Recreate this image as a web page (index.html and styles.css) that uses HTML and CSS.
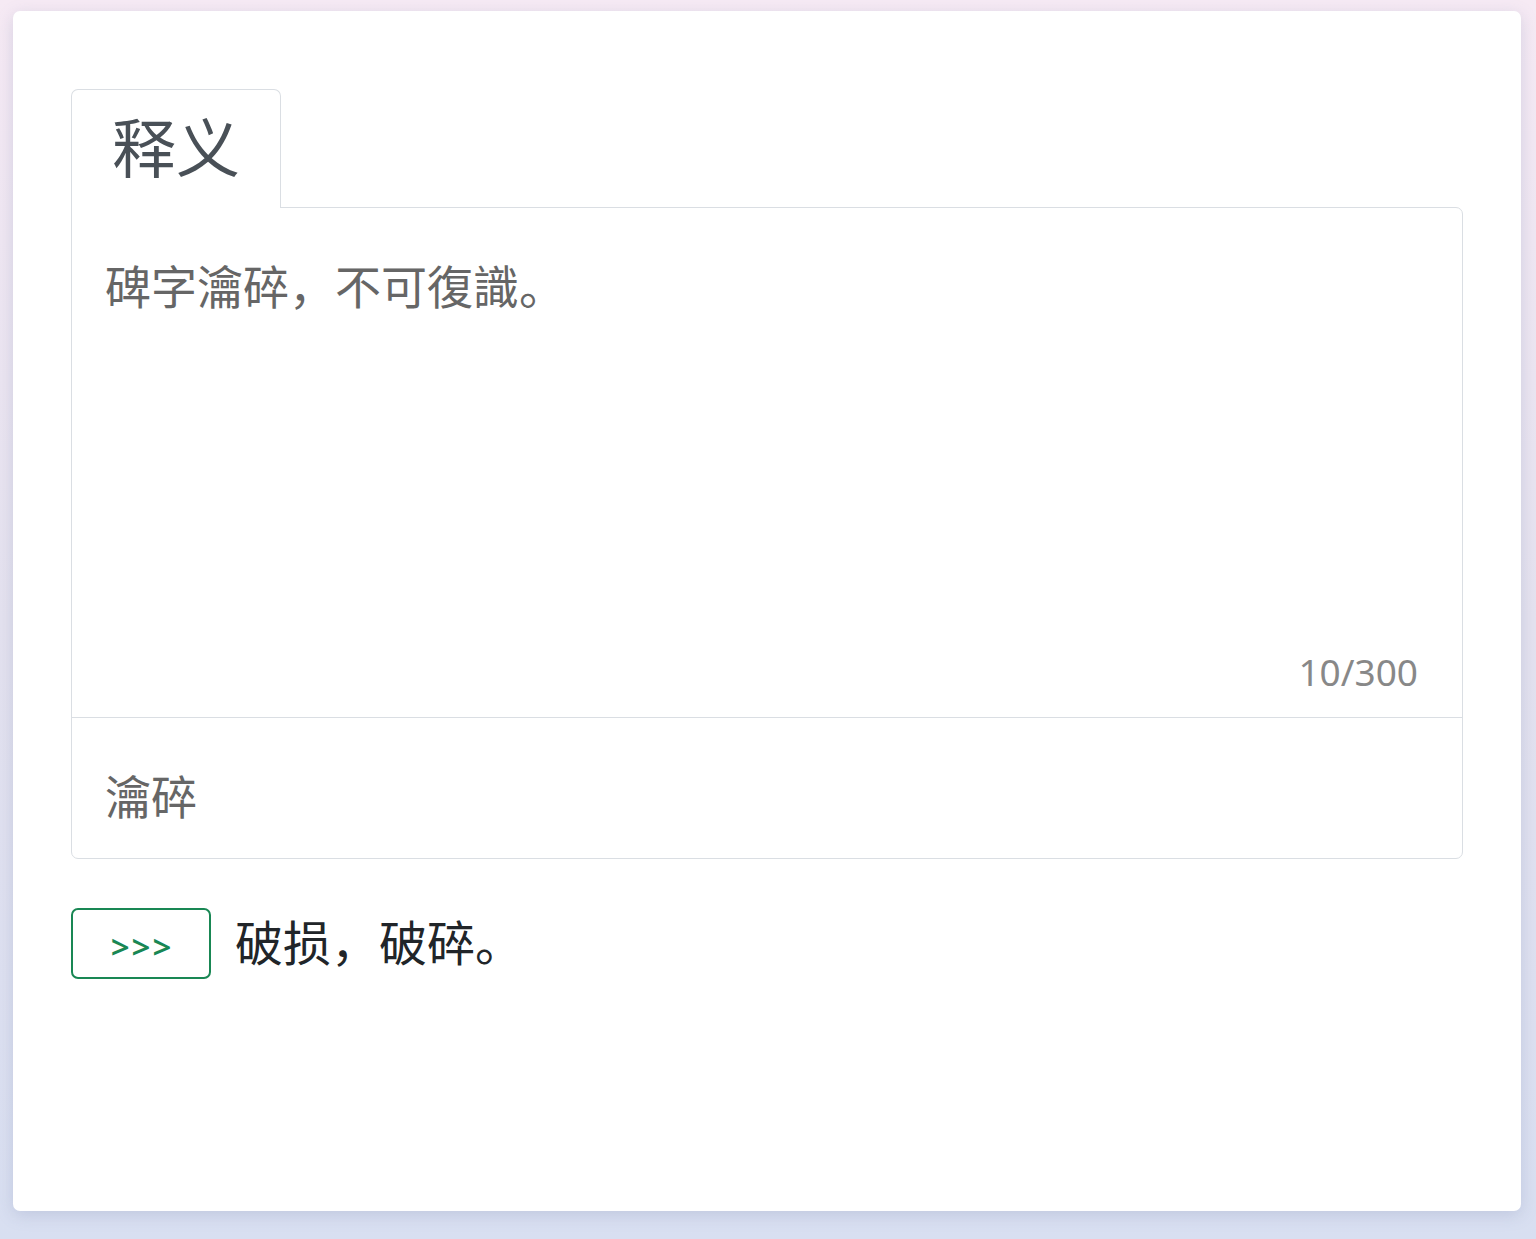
FILE: index.html
```html
<!DOCTYPE html>
<html lang="zh">
<head>
<meta charset="utf-8">
<title>释义</title>
<link rel="stylesheet" href="styles.css">
</head>
<body>
<div class="card">
  <div class="tabs">
    <div class="tab">释义</div>
  </div>
  <div class="panel">
    <div class="source">
      <div class="source-text">碑字瀹碎，不可復識。</div>
      <div class="counter">10/300</div>
    </div>
    <div class="term">瀹碎</div>
  </div>
  <div class="result">
    <button class="go">&gt;&gt;&gt;</button>
    <div class="meaning">破损，破碎。</div>
  </div>
</div>
</body>
</html>
```

FILE: styles.css
```css
html, body {
  margin: 0;
  height: 100%;
}
body {
  background: linear-gradient(180deg, #f6eaf4 0%, #e4e2ef 50%, #d8dff1 100%);
  padding: 11px 15px 28px 13px;
  box-sizing: border-box;
  font-family: "Noto Sans", "Noto Sans CJK SC", sans-serif;
}
.card {
  background: #fff;
  border-radius: 7px;
  height: 1200px;
  box-sizing: border-box;
  padding: 78px 58px 0 58px;
  box-shadow: 0 4px 16px rgba(120, 130, 170, 0.25);
}
.tabs {
  display: flex;
}
.tab {
  position: relative;
  z-index: 1;
  background: #fff;
  border: 1px solid #dadee3;
  border-bottom: none;
  border-radius: 7px 7px 0 0;
  padding: 6px 40px 16px 40px;
  margin-bottom: -1px;
  font-family: "Noto Sans CJK SC", sans-serif;
  font-size: 64px;
  line-height: 96px;
  color: #495057;
}
.panel {
  border: 1px solid #dadee3;
  border-radius: 0 7px 7px 7px;
}
.source {
  height: 510px;
  box-sizing: border-box;
  padding: 42px 44px 18px 33px;
  display: flex;
  flex-direction: column;
  justify-content: space-between;
  border-bottom: 1px solid #dadee3;
}
.source-text {
  font-family: "Noto Sans CJK SC", sans-serif;
  font-size: 46px;
  line-height: 69px;
  color: #666;
}
.counter {
  align-self: flex-end;
  font-family: "Noto Sans", sans-serif;
  font-size: 37px;
  line-height: 55px;
  color: #888;
}
.term {
  height: 140px;
  box-sizing: border-box;
  padding: 42px 33px 0 33px;
  font-family: "Noto Sans CJK SC", sans-serif;
  font-size: 46px;
  line-height: 69px;
  color: #666;
}
.result {
  display: flex;
  align-items: flex-start;
  gap: 24px;
  margin-top: 49px;
}
.go {
  width: 140px;
  height: 71px;
  box-sizing: border-box;
  border: 2px solid #198754;
  border-radius: 7px;
  background: #fff;
  color: #198754;
  font-family: "Noto Sans", sans-serif;
  font-size: 33px;
  font-weight: 600;
  letter-spacing: 2px;
  padding: 5px 0 0 2px;
}
.meaning {
  font-family: "Noto Sans CJK SC", sans-serif;
  font-size: 48px;
  line-height: 72px;
  color: #212529;
  margin-top: -4px;
}
```
